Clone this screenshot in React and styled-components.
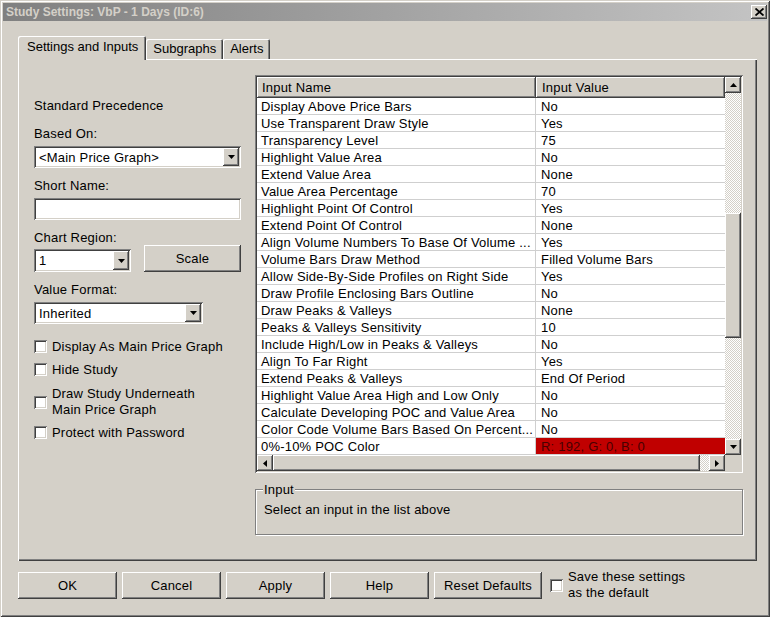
import React from "react";
import styled, { createGlobalStyle, css } from "styled-components";

const GlobalStyle = createGlobalStyle`
  html, body {
    margin: 0;
    padding: 0;
    background: #d4d0c8;
  }
  body {
    font-family: "Liberation Sans", Arial, sans-serif;
    font-size: 13px;
    letter-spacing: 0.2px;
    color: #000;
  }
  * {
    box-sizing: border-box;
  }
`;

const raised = css`
  background: #d4d0c8;
  box-shadow: inset -1px -1px #404040, inset 1px 1px #fff,
    inset -2px -2px #808080, inset 2px 2px #d4d0c8;
`;

const sunken = css`
  box-shadow: inset 1px 1px #808080, inset -1px -1px #fff,
    inset 2px 2px #404040, inset -2px -2px #d4d0c8;
`;

const hatch = css`
  background: repeating-conic-gradient(#fff 0 25%, #d4d0c8 0 50%) 0 0 / 2px
    2px;
`;

const Window = styled.div`
  width: 770px;
  height: 617px;
  padding: 3px;
  display: flex;
  flex-direction: column;
  background: #d4d0c8;
  box-shadow: inset 1px 1px #d4d0c8, inset -1px -1px #404040,
    inset 2px 2px #fff, inset -2px -2px #808080;
`;

const TitleBar = styled.div`
  height: 18px;
  padding-left: 3px;
  display: flex;
  align-items: center;
  justify-content: space-between;
  background: linear-gradient(to right, #808080, #c4c4c4);
`;

const Title = styled.span`
  font-size: 12px;
  font-weight: bold;
  letter-spacing: 0;
  color: #d4d0c8;
`;

const CloseBtn = styled.span`
  width: 16px;
  height: 14px;
  ${raised};
  display: flex;
  align-items: center;
  justify-content: center;
`;

const Body = styled.div`
  padding: 15px 0 0 15px;
  display: flex;
  flex-direction: column;
`;

const TabStrip = styled.div`
  display: flex;
  align-items: flex-end;
  height: 23px;
`;

const Tab = styled.div`
  position: relative;
  z-index: 1;
  height: ${(p) => (p.$active ? 24 : 20)}px;
  margin-bottom: ${(p) => (p.$active ? -1 : 0)}px;
  padding: ${(p) => (p.$active ? "0 8px 0 9px" : "0 7px")};
  line-height: ${(p) => (p.$active ? 22 : 20)}px;
  letter-spacing: 0;
  background: #d4d0c8;
  border-radius: 2px 2px 0 0;
  box-shadow: inset 1px 1px #fff, inset -1px 0 #404040, inset -2px 0 #808080;
  white-space: nowrap;
`;

const Panel = styled.div`
  width: 739px;
  height: 502px;
  padding: 16px 14px 0 16px;
  display: flex;
  gap: 14px;
  background: #d4d0c8;
  box-shadow: inset 1px 1px #fff, inset -1px -1px #404040,
    inset -2px -2px #808080;
`;

const LeftCol = styled.div`
  width: 207px;
  display: flex;
  flex-direction: column;
`;

const Label = styled.div`
  line-height: 15px;
  margin-top: ${(p) => p.$mt || 0}px;
  white-space: nowrap;
`;

const Combo = styled.div`
  width: ${(p) => p.$w}px;
  height: ${(p) => p.$h || 22}px;
  margin-top: ${(p) => p.$mt || 0}px;
  padding: 2px;
  background: #fff;
  ${sunken};
  display: flex;
  align-items: stretch;
`;

const ComboText = styled.span`
  flex: 1;
  padding-left: 3px;
  display: flex;
  align-items: center;
  white-space: nowrap;
  overflow: hidden;
`;

const ArrowBtn = styled.span`
  width: 16px;
  ${raised};
  display: flex;
  align-items: center;
  justify-content: center;
`;

const TextBox = styled.div`
  height: 22px;
  margin-top: 5px;
  background: #fff;
  ${sunken};
`;

const RegionRow = styled.div`
  display: flex;
  align-items: flex-end;
  justify-content: space-between;
`;

const Button = styled.div`
  width: ${(p) => p.$w}px;
  height: 27px;
  ${raised};
  display: flex;
  align-items: center;
  justify-content: center;
  white-space: nowrap;
`;

const CheckRow = styled.div`
  display: flex;
  align-items: center;
  gap: 5px;
  margin-top: ${(p) => p.$mt || 0}px;
  line-height: ${(p) => p.$lh || 15}px;
  white-space: nowrap;
`;

const CheckBox = styled.span`
  width: 13px;
  height: 13px;
  flex: none;
  background: #fff;
  ${sunken};
`;

const RightCol = styled.div`
  width: 488px;
  display: flex;
  flex-direction: column;
`;

const ListBox = styled.div`
  height: 398px;
  padding: 2px;
  background: #d4d0c8;
  ${sunken};
  display: grid;
  grid-template-columns: 1fr 16px;
  grid-template-rows: 1fr 16px;
`;

const List = styled.div`
  background: #fff;
  overflow: hidden;
  display: flex;
  flex-direction: column;
`;

const Header = styled.div`
  display: grid;
  grid-template-columns: 279px 1fr;
  height: 21px;
  flex: none;
`;

const HeadCell = styled.div`
  ${raised};
  padding-left: ${(p) => p.$pl}px;
  line-height: 21px;
  white-space: nowrap;
`;

const Row = styled.div`
  display: grid;
  grid-template-columns: 279px 1fr;
  height: 17px;
  flex: none;
  overflow: hidden;
  border-bottom: 1px solid #cfcfcf;
`;

const Cell = styled.div`
  line-height: 18px;
  padding-left: 4px;
  white-space: nowrap;
  overflow: hidden;
  border-right: 1px solid #cfcfcf;
`;

const ValueCell = styled.div`
  line-height: 18px;
  padding-left: 5px;
  white-space: nowrap;
  overflow: hidden;
  background: ${(p) => p.$bg || "transparent"};
  color: ${(p) => (p.$bg ? "#480000" : "#000")};
`;

const VScroll = styled.div`
  display: flex;
  flex-direction: column;
`;

const HScroll = styled.div`
  display: flex;
`;

const ScrollBtn = styled.span`
  width: 16px;
  height: 16px;
  flex: none;
  ${raised};
  display: flex;
  align-items: center;
  justify-content: center;
`;

const Track = styled.div`
  flex: 1;
  display: flex;
  flex-direction: ${(p) => (p.$vertical ? "column" : "row")};
  ${hatch};
`;

const Thumb = styled.div`
  flex: none;
  ${raised};
`;

const Corner = styled.div`
  background: #d4d0c8;
`;

const GroupBox = styled.div`
  margin-top: 16px;
  height: 46px;
  padding: 0 7px;
  border: 1px solid #808080;
  box-shadow: inset 1px 1px #fff, 1px 1px #fff;
`;

const Legend = styled.div`
  width: fit-content;
  margin-top: -8px;
  padding: 0 1px;
  line-height: 15px;
  background: #d4d0c8;
`;

const GroupText = styled.div`
  margin: 5px 0 0 1px;
  line-height: 15px;
`;

const ButtonRow = styled.div`
  display: flex;
  align-items: center;
  gap: 5px;
  margin-top: 8px;
`;

const SaveCheck = styled.div`
  display: flex;
  align-items: center;
  gap: 5px;
  margin-left: 3px;
  line-height: 16px;
`;

const Arrow = ({ dir }) => {
  const pts = {
    down: "0,0 7,0 3.5,4",
    up: "0,4 7,4 3.5,0",
    left: "4,0 4,7 0,3.5",
    right: "0,0 0,7 4,3.5",
  }[dir];
  const vertical = dir === "up" || dir === "down";
  return (
    <svg width={vertical ? 7 : 4} height={vertical ? 4 : 7} viewBox={vertical ? "0 0 7 4" : "0 0 4 7"}>
      <polygon points={pts} fill="#000" />
    </svg>
  );
};

const rows = [
  ["Display Above Price Bars", "No"],
  ["Use Transparent Draw Style", "Yes"],
  ["Transparency Level", "75"],
  ["Highlight Value Area", "No"],
  ["Extend Value Area", "None"],
  ["Value Area Percentage", "70"],
  ["Highlight Point Of Control", "Yes"],
  ["Extend Point Of Control", "None"],
  ["Align Volume Numbers To Base Of Volume ...", "Yes"],
  ["Volume Bars Draw Method", "Filled Volume Bars"],
  ["Allow Side-By-Side Profiles on Right Side", "Yes"],
  ["Draw Profile Enclosing Bars Outline", "No"],
  ["Draw Peaks & Valleys", "None"],
  ["Peaks & Valleys Sensitivity", "10"],
  ["Include High/Low in Peaks & Valleys", "No"],
  ["Align To Far Right", "Yes"],
  ["Extend Peaks & Valleys", "End Of Period"],
  ["Highlight Value Area High and Low Only", "No"],
  ["Calculate Developing POC and Value Area", "No"],
  ["Color Code Volume Bars Based On Percent...", "No"],
  ["0%-10% POC Color", "R: 192, G: 0, B: 0", "#c00000"],
];

const App = () => {
  return (
    <>
      <GlobalStyle />
      <Window>
        <TitleBar>
          <Title>Study Settings: VbP - 1 Days (ID:6)</Title>
          <CloseBtn>
            <svg width="9" height="8" viewBox="0 0 9 8">
              <path d="M0.5 0.5 L8.5 7.5 M8.5 0.5 L0.5 7.5" stroke="#000" strokeWidth="1.8" />
            </svg>
          </CloseBtn>
        </TitleBar>
        <Body>
          <TabStrip>
            <Tab $active>Settings and Inputs</Tab>
            <Tab>Subgraphs</Tab>
            <Tab>Alerts</Tab>
          </TabStrip>
          <Panel>
            <LeftCol>
              <Label $mt={23}>Standard Precedence</Label>
              <Label $mt={13}>Based On:</Label>
              <Combo $w={207} $mt={5}>
                <ComboText>&lt;Main Price Graph&gt;</ComboText>
                <ArrowBtn>
                  <Arrow dir="down" />
                </ArrowBtn>
              </Combo>
              <Label $mt={10}>Short Name:</Label>
              <TextBox />
              <Label $mt={10}>Chart Region:</Label>
              <RegionRow>
                <Combo $w={97} $h={23}>
                  <ComboText>1</ComboText>
                  <ArrowBtn>
                    <Arrow dir="down" />
                  </ArrowBtn>
                </Combo>
                <Button $w={97}>Scale</Button>
              </RegionRow>
              <Label $mt={10}>Value Format:</Label>
              <Combo $w={169} $mt={5}>
                <ComboText>Inherited</ComboText>
                <ArrowBtn>
                  <Arrow dir="down" />
                </ArrowBtn>
              </Combo>
              <CheckRow $mt={15}>
                <CheckBox />
                Display As Main Price Graph
              </CheckRow>
              <CheckRow $mt={8}>
                <CheckBox />
                Hide Study
              </CheckRow>
              <CheckRow $mt={9} $lh={16}>
                <CheckBox />
                <span>
                  Draw Study Underneath
                  <br />
                  Main Price Graph
                </span>
              </CheckRow>
              <CheckRow $mt={7}>
                <CheckBox />
                Protect with Password
              </CheckRow>
            </LeftCol>
            <RightCol>
              <ListBox>
                <List>
                  <Header>
                    <HeadCell $pl={5}>Input Name</HeadCell>
                    <HeadCell $pl={6}>Input Value</HeadCell>
                  </Header>
                  {rows.map(([name, value, bg]) => (
                    <Row key={name}>
                      <Cell>{name}</Cell>
                      <ValueCell $bg={bg}>{value}</ValueCell>
                    </Row>
                  ))}
                </List>
                <VScroll>
                  <ScrollBtn>
                    <Arrow dir="up" />
                  </ScrollBtn>
                  <Track $vertical>
                    <Thumb style={{ marginTop: 120, height: 125 }} />
                  </Track>
                  <ScrollBtn>
                    <Arrow dir="down" />
                  </ScrollBtn>
                </VScroll>
                <HScroll>
                  <ScrollBtn>
                    <Arrow dir="left" />
                  </ScrollBtn>
                  <Track>
                    <Thumb style={{ width: 427 }} />
                  </Track>
                  <ScrollBtn>
                    <Arrow dir="right" />
                  </ScrollBtn>
                </HScroll>
                <Corner />
              </ListBox>
              <GroupBox>
                <Legend>Input</Legend>
                <GroupText>Select an input in the list above</GroupText>
              </GroupBox>
            </RightCol>
          </Panel>
          <ButtonRow>
            <Button $w={99}>OK</Button>
            <Button $w={99}>Cancel</Button>
            <Button $w={99}>Apply</Button>
            <Button $w={99}>Help</Button>
            <Button $w={108}>Reset Defaults</Button>
            <SaveCheck>
              <CheckBox />
              <span>
                Save these settings
                <br />
                as the default
              </span>
            </SaveCheck>
          </ButtonRow>
        </Body>
      </Window>
    </>
  );
};

export default App;
